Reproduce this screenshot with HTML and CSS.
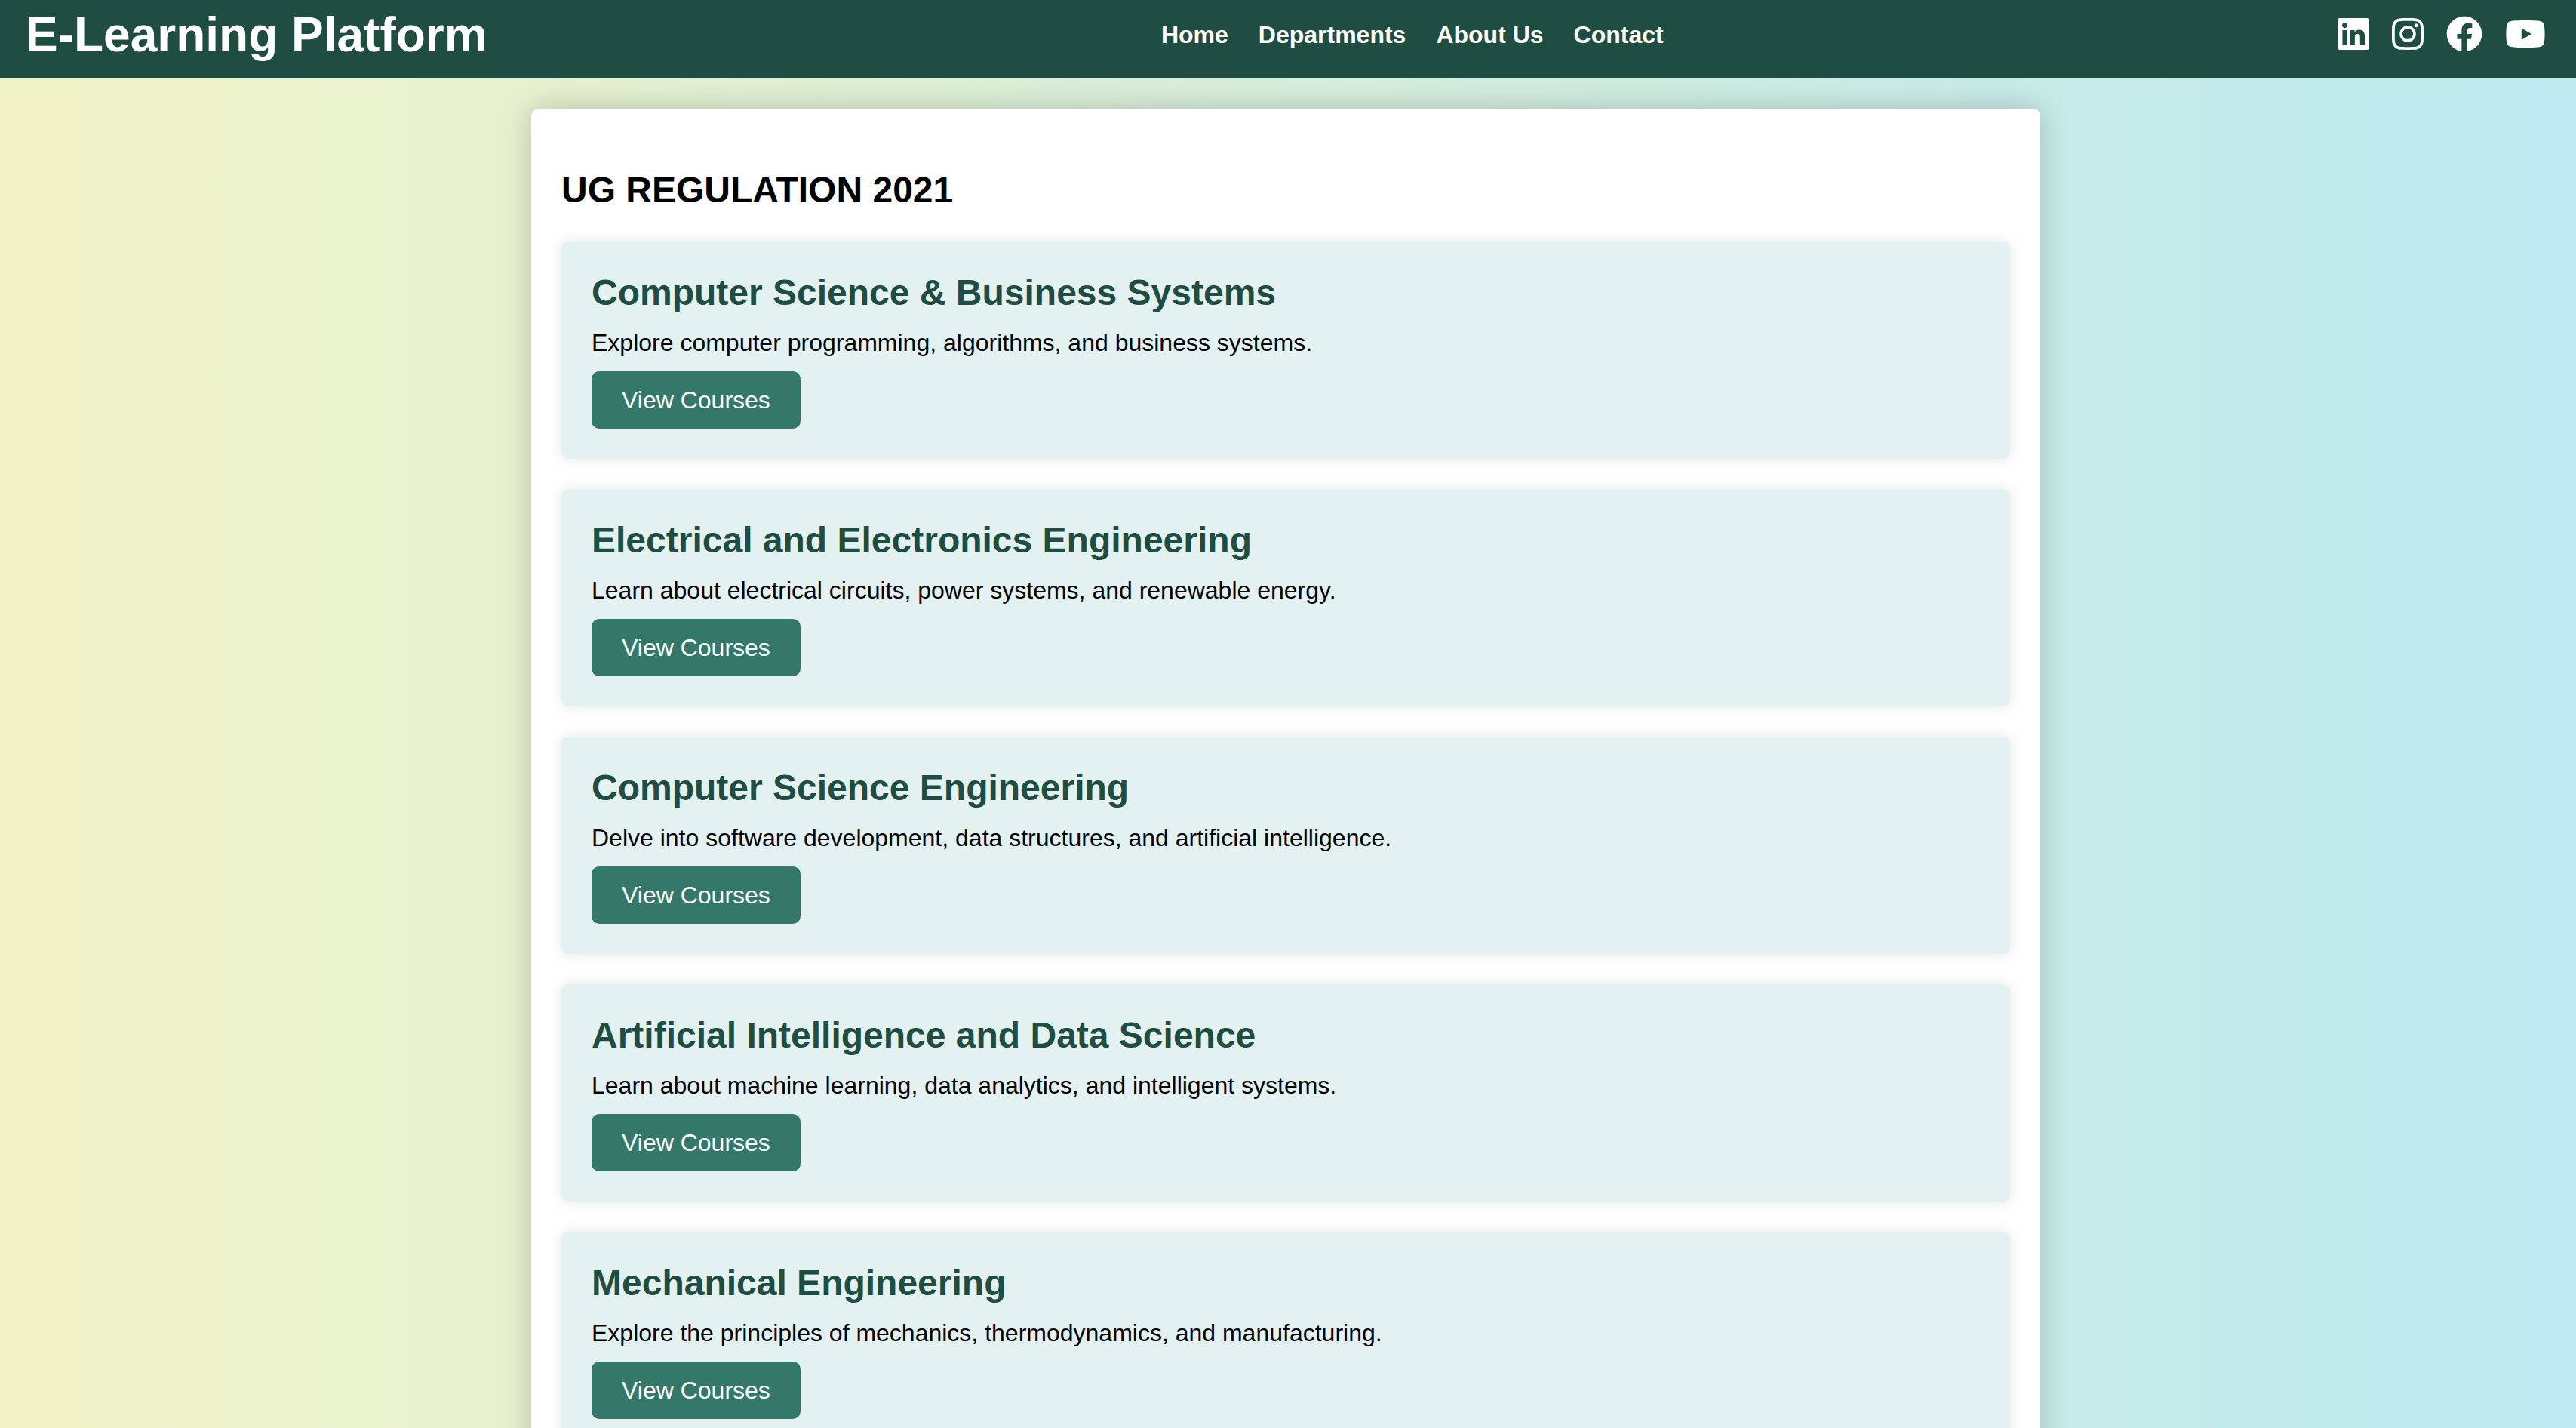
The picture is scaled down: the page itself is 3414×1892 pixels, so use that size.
FILE: index.html
```html
<!DOCTYPE html>
<html lang="en">
<head>
<meta charset="utf-8">
<title>E-Learning Platform</title>
<link rel="stylesheet" href="styles.css">
</head>
<body>
<header class="header">
  <h1 class="brand">E-Learning Platform</h1>
  <nav class="nav">
    <a href="#home">Home</a>
    <a href="#departments">Departments</a>
    <a href="#about">About Us</a>
    <a href="#contact">Contact</a>
  </nav>
  <div class="social">
    <a href="#linkedin" aria-label="LinkedIn"><svg viewBox="0 0 448 512"><path d="M416 32H31.9C14.3 32 0 46.5 0 64.3v383.4C0 465.5 14.3 480 31.9 480H416c17.6 0 32-14.5 32-32.3V64.3c0-17.8-14.4-32.3-32-32.3zM135.4 416H69V202.2h66.5V416zm-33.2-243c-21.3 0-38.5-17.3-38.5-38.5S80.9 96 102.2 96c21.2 0 38.5 17.3 38.5 38.5 0 21.3-17.2 38.5-38.5 38.5zm282.1 243h-66.4V312c0-24.8-.5-56.7-34.5-56.7-34.6 0-39.9 27-39.9 54.9V416h-66.4V202.2h63.7v29.2h.9c8.9-16.8 30.6-34.5 62.9-34.5 67.2 0 79.7 44.3 79.7 101.9V416z"/></svg></a>
    <a href="#instagram" aria-label="Instagram"><svg viewBox="0 0 448 512"><path d="M224.1 141c-63.6 0-114.9 51.3-114.9 114.9s51.3 114.9 114.9 114.9S339 319.5 339 255.900 287.700 141 224.100 141zm0 189.600c-41.100 0-74.700-33.500-74.700-74.700s33.500-74.700 74.700-74.700 74.700 33.500 74.700 74.700-33.600 74.700-74.700 74.700zm146.400-194.300c0 14.900-12 26.800-26.800 26.800-14.900 0-26.800-12-26.800-26.800s12-26.800 26.800-26.800 26.800 12 26.800 26.800zm76.100 27.200c-1.700-35.900-9.900-67.700-36.200-93.900-26.200-26.200-58-34.400-93.900-36.200-37-2.100-147.900-2.100-184.900 0-35.800 1.700-67.600 9.900-93.900 36.100s-34.400 58-36.200 93.900c-2.100 37-2.100 147.900 0 184.900 1.700 35.900 9.900 67.700 36.200 93.900s58 34.400 93.900 36.200c37 2.100 147.900 2.100 184.900 0 35.900-1.700 67.700-9.900 93.900-36.200 26.200-26.200 34.400-58 36.200-93.900 2.100-37 2.100-147.800 0-184.800zM398.800 388c-7.800 19.600-22.900 34.700-42.600 42.600-29.500 11.700-99.500 9-132.100 9s-102.700 2.600-132.100-9c-19.600-7.800-34.700-22.900-42.600-42.600-11.700-29.500-9-99.500-9-132.100s-2.600-102.700 9-132.100c7.800-19.600 22.900-34.700 42.600-42.600 29.500-11.700 99.500-9 132.100-9s102.700-2.600 132.100 9c19.600 7.800 34.700 22.900 42.600 42.600 11.700 29.500 9 99.500 9 132.100s2.700 102.700-9 132.100z"/></svg></a>
    <a href="#facebook" aria-label="Facebook"><svg viewBox="0 0 512 512"><path d="M504 256C504 119 393 8 256 8S8 119 8 256c0 123.780 90.690 226.380 209.250 245V327.690h-63V256h63v-54.640c0-62.150 37-96.480 93.670-96.480 27.140 0 55.520 4.840 55.520 4.840v61h-31.280c-30.800 0-40.410 19.120-40.410 38.770V256h68.780l-11 71.690h-57.780V501C413.310 482.380 504 379.780 504 256z"/></svg></a>
    <a href="#youtube" aria-label="YouTube"><svg viewBox="0 0 576 512"><path d="M549.655 124.083c-6.281-23.650-24.787-42.276-48.284-48.597C458.781 64 288 64 288 64S117.220 64 74.629 75.486c-23.497 6.322-42.003 24.947-48.284 48.597-11.412 42.867-11.412 132.305-11.412 132.305s0 89.438 11.412 132.305c6.281 23.650 24.787 41.500 48.284 47.821C117.220 448 288 448 288 448s170.780 0 213.371-11.486c23.497-6.321 42.003-24.171 48.284-47.821 11.412-42.867 11.412-132.305 11.412-132.305s0-89.438-11.412-132.305zm-317.510 213.508V175.185l142.739 81.205-142.739 81.201z"/></svg></a>
  </div>
</header>
<main class="page">
  <div class="container">
    <h2 class="heading">UG REGULATION 2021</h2>
    <section class="card">
      <h2>Computer Science &amp; Business Systems</h2>
      <p>Explore computer programming, algorithms, and business systems.</p>
      <a class="button" href="#csbs">View Courses</a>
    </section>
    <section class="card">
      <h2>Electrical and Electronics Engineering</h2>
      <p>Learn about electrical circuits, power systems, and renewable energy.</p>
      <a class="button" href="#eee">View Courses</a>
    </section>
    <section class="card">
      <h2>Computer Science Engineering</h2>
      <p>Delve into software development, data structures, and artificial intelligence.</p>
      <a class="button" href="#cse">View Courses</a>
    </section>
    <section class="card">
      <h2>Artificial Intelligence and Data Science</h2>
      <p>Learn about machine learning, data analytics, and intelligent systems.</p>
      <a class="button" href="#aids">View Courses</a>
    </section>
    <section class="card">
      <h2>Mechanical Engineering</h2>
      <p>Explore the principles of mechanics, thermodynamics, and manufacturing.</p>
      <a class="button" href="#mech">View Courses</a>
    </section>
  </div>
</main>
</body>
</html>
```
FILE: styles.css
```css
* {
  box-sizing: border-box;
}

html {
  scrollbar-width: none;
}

body {
  margin: 0;
  font-family: Arial, "Liberation Sans", sans-serif;
  font-size: 32px;
  line-height: 36px;
  color: #000;
  background: linear-gradient(to right, #f1f3c7, #bce9f0);
}

h1,
h2,
p {
  margin: 0;
}

.header {
  display: flex;
  justify-content: space-between;
  align-items: center;
  padding: 9px 40px 21px 34px;
  background: #1f4d41;
  color: #fff;
}

.brand {
  font-size: 64px;
  line-height: 74px;
}

.nav {
  display: flex;
  gap: 40px;
  font-weight: bold;
}

.header a {
  color: #fff;
  text-decoration: none;
}

.social {
  display: flex;
  gap: 30px;
  padding-bottom: 2px;
}

.social svg {
  display: block;
  height: 48px;
  fill: currentColor;
}

.page {
  padding: 40px 46px 40px 40px;
}

.container {
  display: flex;
  flex-direction: column;
  gap: 40px;
  max-width: 2000px;
  margin: 0 auto;
  padding: 80px 40px 40px;
  background: #fff;
  border-radius: 10px;
  box-shadow: 0 0 40px rgba(0, 0, 0, 0.2);
}

.heading,
.card h2 {
  font-size: 48px;
  line-height: 56px;
}

.card {
  display: flex;
  flex-direction: column;
  align-items: flex-start;
  gap: 20px;
  padding: 40px;
  background: #e3f1f0;
  border-radius: 10px;
  box-shadow: 0 0 20px rgba(0, 0, 0, 0.1);
}

.card h2 {
  color: #1f4d41;
}

.button {
  padding: 20px 40px;
  background: #34786a;
  border-radius: 10px;
  color: #fff;
  text-decoration: none;
}
```
